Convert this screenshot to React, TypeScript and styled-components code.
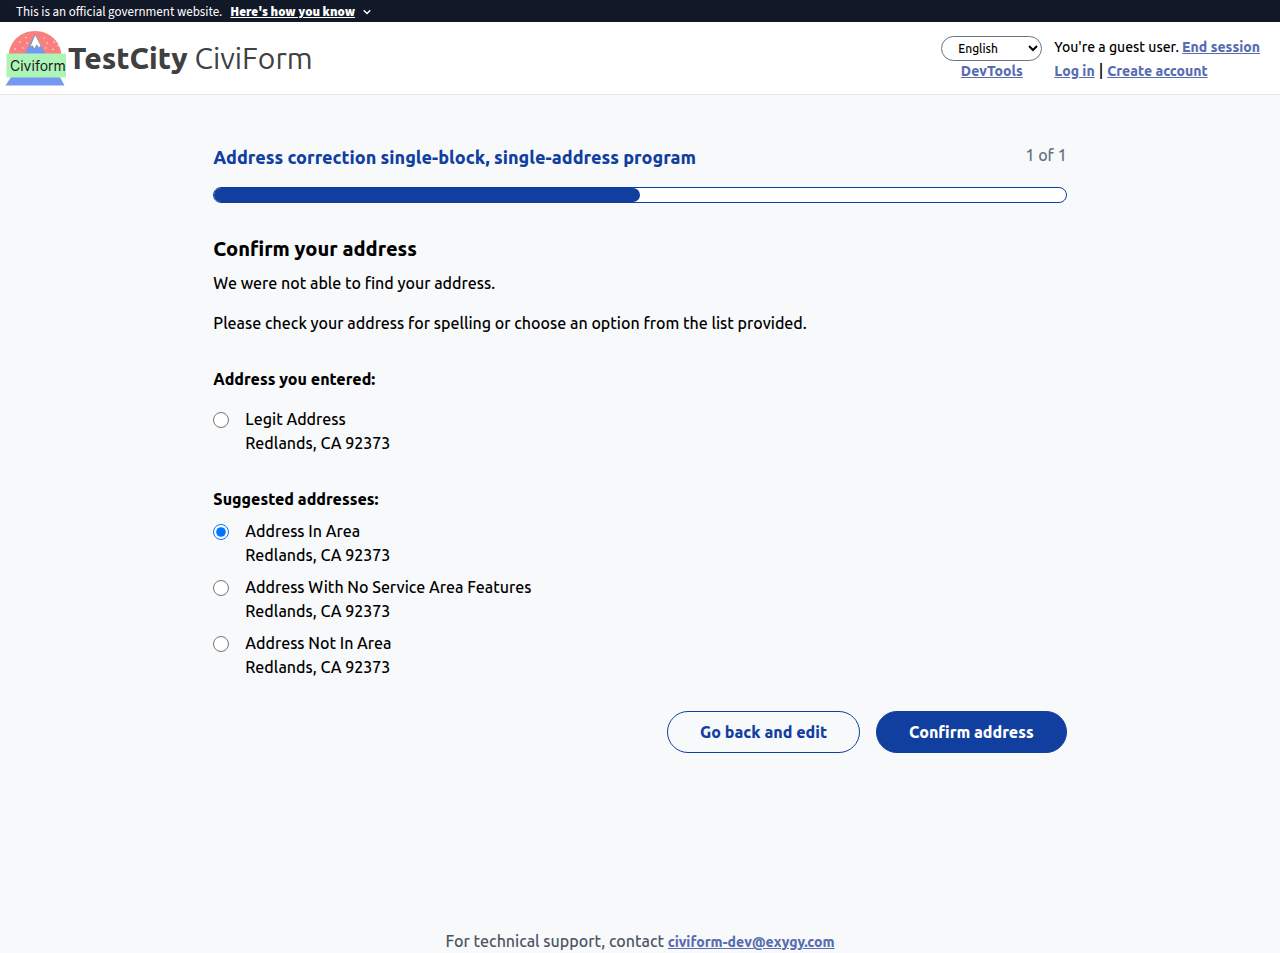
import React, { useState } from "react";
import styled, { createGlobalStyle, css } from "styled-components";

const GlobalStyle = createGlobalStyle`
  *, *::before, *::after { box-sizing: border-box; }
  body {
    margin: 0;
    background: #f8f9fb;
    color: #000;
    font-family: Ubuntu, "Ubuntu Sans", "Noto Sans", sans-serif;
    font-size: 16px;
    font-weight: 500;
    line-height: 24px;
  }
  h1, h2, p, fieldset, legend { margin: 0; padding: 0; border: 0; }
  button, select, input { font-family: inherit; }
  b { font-weight: 800; }
`;

const blue = "#113f9f";

const Page = styled.div`
  display: flex;
  flex-direction: column;
  min-height: 100vh;
`;

const Banner = styled.div`
  display: flex;
  align-items: center;
  gap: 8px;
  height: 22px;
  padding: 2px 16px 0;
  background: #111827;
  color: #fff;
  font-family: "Source Sans Pro", "Source Sans 3", "Noto Sans CJK SC", sans-serif;
  font-size: 13px;
  font-weight: 400;
  line-height: 20px;
`;

const BannerToggle = styled.button`
  display: flex;
  align-items: center;
  gap: 8px;
  padding: 0;
  border: 0;
  background: none;
  color: inherit;
  font-size: 13px;
  font-weight: 900;
  line-height: 20px;
  text-decoration: underline;
`;

const Header = styled.header`
  display: flex;
  align-items: center;
  justify-content: space-between;
  min-height: 73px;
  padding: 0 20px 0 4px;
  background: #fff;
  border-bottom: 1px solid #e5e7eb;
`;

const Brand = styled.a`
  display: flex;
  align-items: center;
  color: #404040;
  font-size: 30px;
  font-weight: 400;
  line-height: 36px;
  text-decoration: none;
`;

const Account = styled.div`
  display: flex;
  gap: 12px;
  padding-top: 2px;
  font-size: 14px;
`;

const AccountColumn = styled.div<{ $centered?: boolean }>`
  display: flex;
  flex-direction: column;
  align-items: ${(p) => (p.$centered ? "center" : "flex-start")};
`;

const LanguageSelect = styled.select`
  width: 101px;
  height: 25px;
  margin: 1px 0 -2px;
  padding: 0 0 0 12px;
  border: 1px solid #6b7280;
  border-radius: 13px;
  background: #fff;
  color: #000;
  font-size: 12px;
  font-weight: 500;
`;

const TextLink = styled.a`
  color: #586db0;
  font-size: 14px;
  font-weight: 800;
  text-decoration: underline;
`;

const Divider = styled.span`
  margin: 0 4px;
  font-size: 16px;
  line-height: 20px;
`;

const Main = styled.main`
  flex: 1;
  width: calc(100% * 2 / 3);
  margin: 0 auto;
  padding: 48px 0;
`;

const ProgramRow = styled.div`
  display: flex;
  justify-content: space-between;
  align-items: flex-start;
`;

const ProgramTitle = styled.h1`
  color: ${blue};
  font-size: 18px;
  font-weight: 800;
  line-height: 28px;
`;

const StepCount = styled.span`
  color: #6b7280;
`;

const ProgressTrack = styled.div`
  height: 16px;
  margin: 16px 0 32px;
  overflow: hidden;
  border: 1px solid ${blue};
  border-radius: 8px;
  background: #fff;
`;

const ProgressFill = styled.div`
  height: 100%;
  border-radius: 0 8px 8px 0;
  background: ${blue};
`;

const Heading = styled.h2`
  margin-bottom: 8px;
  font-size: 20px;
  font-weight: 800;
  line-height: 28px;
`;

const Paragraph = styled.p`
  margin-bottom: 16px;
`;

const AddressGroup = styled.fieldset<{ $gap: number }>`
  margin-top: 32px;

  legend {
    margin-bottom: ${(p) => p.$gap}px;
    font-weight: 800;
  }
`;

const Option = styled.label`
  display: flex;
  align-items: flex-start;
  gap: 16px;

  & + & {
    margin-top: 8px;
  }

  input {
    width: 16px;
    height: 16px;
    margin: 5px 0 0;
  }
`;

const OptionText = styled.span`
  display: flex;
  flex-direction: column;
`;

const Actions = styled.div`
  display: flex;
  justify-content: flex-end;
  gap: 16px;
  margin-top: 32px;
`;

const ActionButton = styled.button<{ $primary?: boolean }>`
  height: 42px;
  padding: 0 32px;
  border: 1px solid ${blue};
  border-radius: 21px;
  background: transparent;
  color: ${blue};
  font-size: 16px;
  font-weight: 800;
  line-height: 24px;
  ${(p) =>
    p.$primary &&
    css`
      background: ${blue};
      color: #fff;
    `}
`;

const Footer = styled.footer`
  color: #4b5563;
  line-height: 22px;
  text-align: center;
`;

const snow = [
  [22, 9.5], [16, 14], [23, 15], [11, 21], [19, 20], [40, 10],
  [43, 15], [50, 14], [42, 20], [49, 21.5], [54, 17.5],
];

const Logo = () => (
  <svg width="64" height="60" viewBox="0 0 64 60" role="img" aria-label="CiviForm logo">
    <path d="M4.500 28C5 14 16 3 31 3s26 11 26.500 25z" fill="#fa8080" />
    <path d="M31 6 42 27H20z" fill="#7598f0" />
    <path d="M31.200 6.500 36.800 17.500 34.800 20.200 32.800 16.800 30.400 21 28.400 17.800 25.800 19.200z" fill="#fff" stroke="#777" strokeWidth=".5" />
    <g fill="#fff">
      {snow.map(([x, y]) => (
        <circle key={`${x}-${y}`} cx={x} cy={y} r=".7" />
      ))}
    </g>
    <path d="M7 49h49l4.500 8.500H1.500z" fill="#7598f0" />
    <path d="M2.500 25.500h59.500v24H2.500z" fill="#adf4b7" />
    <text x="6" y="43" fontFamily="Inter, sans-serif" fontSize="14" fontWeight="400" fill="#1c1c1c">Civiform</text>
  </svg>
);

const Chevron = () => (
  <svg width="8" height="6" viewBox="0 0 8 6" fill="none" stroke="#fff" strokeWidth="1.4" aria-hidden="true">
    <path d="M.7 1.200 4 4.500 7.300 1.200" />
  </svg>
);

const enteredAddress = { id: "entered", street: "Legit Address", city: "Redlands, CA 92373" };

const suggestions = [
  { id: "in-area", street: "Address In Area", city: "Redlands, CA 92373" },
  { id: "no-features", street: "Address With No Service Area Features", city: "Redlands, CA 92373" },
  { id: "not-in-area", street: "Address Not In Area", city: "Redlands, CA 92373" },
];

export default function App() {
  const [selected, setSelected] = useState("in-area");
  const progress = 50;

  const renderOption = (address: typeof enteredAddress) => (
    <Option key={address.id}>
      <input
        type="radio"
        name="address"
        value={address.id}
        checked={selected === address.id}
        onChange={() => setSelected(address.id)}
      />
      <OptionText>
        <span>{address.street}</span>
        <span>{address.city}</span>
      </OptionText>
    </Option>
  );

  return (
    <Page>
      <GlobalStyle />
      <Banner>
        <span>This is an official government website.</span>
        <BannerToggle type="button" aria-expanded="false">
          Here's how you know
          <Chevron />
        </BannerToggle>
      </Banner>
      <Header>
        <Brand href="#">
          <Logo />
          <span>
            <b>TestCity</b> CiviForm
          </span>
        </Brand>
        <Account>
          <AccountColumn $centered>
            <LanguageSelect aria-label="Language" defaultValue="en">
              <option value="en">English</option>
            </LanguageSelect>
            <TextLink href="#">DevTools</TextLink>
          </AccountColumn>
          <AccountColumn>
            <span>
              You're a guest user. <TextLink href="#">End session</TextLink>
            </span>
            <span>
              <TextLink href="#">Log in</TextLink>
              <Divider>|</Divider>
              <TextLink href="#">Create account</TextLink>
            </span>
          </AccountColumn>
        </Account>
      </Header>
      <Main>
        <ProgramRow>
          <ProgramTitle>Address correction single-block, single-address program</ProgramTitle>
          <StepCount>1 of 1</StepCount>
        </ProgramRow>
        <ProgressTrack role="progressbar" aria-label="Application progress" aria-valuenow={progress}>
          <ProgressFill style={{ width: `${progress}%` }} />
        </ProgressTrack>
        <Heading>Confirm your address</Heading>
        <Paragraph>We were not able to find your address.</Paragraph>
        <Paragraph>Please check your address for spelling or choose an option from the list provided.</Paragraph>
        <form onSubmit={(event) => event.preventDefault()}>
          <AddressGroup $gap={16}>
            <legend>Address you entered:</legend>
            {renderOption(enteredAddress)}
          </AddressGroup>
          <AddressGroup $gap={8}>
            <legend>Suggested addresses:</legend>
            {suggestions.map(renderOption)}
          </AddressGroup>
          <Actions>
            <ActionButton type="button">Go back and edit</ActionButton>
            <ActionButton type="submit" $primary>
              Confirm address
            </ActionButton>
          </Actions>
        </form>
      </Main>
      <Footer>
        For technical support, contact <TextLink href="mailto:civiform-dev@exygy.com">civiform-dev@exygy.com</TextLink>
      </Footer>
    </Page>
  );
}
